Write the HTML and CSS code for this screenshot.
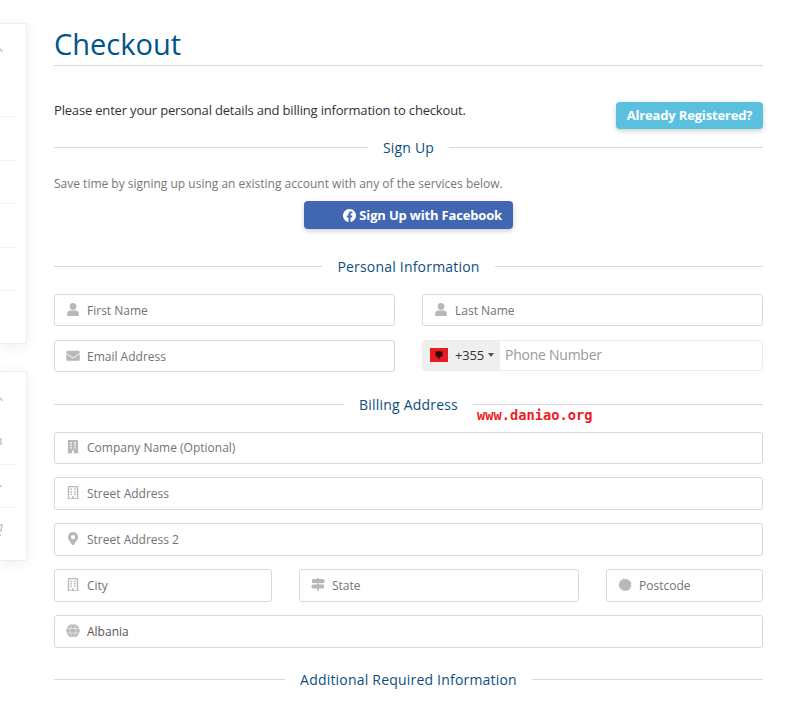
FILE: index.html
```html
<!DOCTYPE html>
<html lang="en">
<head>
<meta charset="utf-8">
<title>Checkout</title>
<link rel="stylesheet" href="styles.css">
</head>
<body>
<svg class="defs" aria-hidden="true">
  <symbol id="user" viewBox="0 0 448 512"><path d="M224 256a128 128 0 1 0 0-256 128 128 0 0 0 0 256zm96 32H128C57 288 0 345 0 416v48c0 26 22 48 48 48h352c26 0 48-22 48-48v-48c0-71-57-128-128-128z"/></symbol>
  <symbol id="mail" viewBox="0 0 512 512"><path d="M502 191c4-3 10 0 10 5v204c0 26-22 48-48 48H48c-26 0-48-22-48-48V196c0-5 6-8 10-5 22 17 52 40 155 114 21 15 57 48 91 47 34 1 71-32 91-47 103-74 133-97 155-114zM256 320c23 0 57-29 74-42 133-96 143-105 173-129 6-4 9-11 9-19v-18c0-26-22-48-48-48H48c-26 0-48 22-48 48v18c0 8 3 15 9 19 30 24 40 33 173 129 17 13 51 42 74 42z"/></symbol>
  <symbol id="building" viewBox="0 0 448 512"><path fill-rule="evenodd" d="M0 476h32V24c0-13 11-24 24-24h336c13 0 24 11 24 24v452h32v36H256V396h-64v116H0zM120 76v52h56v-52zM272 76v52h56v-52zM120 172v52h56v-52zM272 172v52h56v-52zM120 268v52h56v-52zM272 268v52h56v-52z"/></symbol>
  <symbol id="building-line" viewBox="0 0 448 512"><path fill-rule="evenodd" d="M0 472h28V24c0-13 11-24 24-24h344c13 0 24 11 24 24v448h28v40H0zM80 48v416h112v-80h64v80h112V48zM124 92h60v60h-60zM264 92h60v60h-60zM124 188h60v60h-60zM264 188h60v60h-60zM124 284h60v60h-60zM264 284h60v60h-60z"/></symbol>
  <symbol id="pin" viewBox="0 0 384 512"><path d="M172 502C27 291 0 269 0 192a192 192 0 0 1 384 0c0 77-27 99-172 310a24 24 0 0 1-40 0zM192 272a80 80 0 1 0 0-160 80 80 0 0 0 0 160z"/></symbol>
  <symbol id="signs" viewBox="0 0 512 512"><path d="M507 91l-43-43c-6-6-14-9-23-9H288V16c0-9-7-16-16-16h-32c-9 0-16 7-16 16v23H56c-13 0-24 11-24 24v112c0 13 11 24 24 24h385c9 0 17-3 23-9l43-43c7-7 7-49 0-56zM224 496c0 9 7 16 16 16h32c9 0 16-7 16-16V400h-64zm232-248H288v-30h-64v30H71c-9 0-17 3-23 9L5 300c-7 7-7 39 0 46l43 43c6 6 14 9 23 9h385c13 0 24-11 24-24V272c0-13-11-24-24-24z"/></symbol>
  <symbol id="seal" viewBox="0 0 24 24"><path d="M12 0l2 3 3-2 1 3.500 3.500-.5-.5 3.500 3 1-2 3 2 2-2.500 2 1.500 3-3.500.5-.500 3.500-3-1-1.500 3-2.500-2.500L9 24l-1-3.500-3.500 1L4.500 18 1 17l1.500-3L0 12l2.500-2.500L1 7l3.500-1V2.500L8 3.500 9 .5l2.500 2z"/></symbol>
  <symbol id="globe" viewBox="0 0 24 24"><circle cx="12" cy="12" r="12"/><path fill="none" stroke="#fff" stroke-width="1" d="M0 8h24M0 16h24M12 0C5 6 5 18 12 24M12 0c7 6 7 18 0 24"/></symbol>
</svg>
<div class="page">
  <aside class="sidebar">
    <section class="card card-categories"><div class="row head"><i class="chevron"></i></div><div class="row"></div><div class="row"></div><div class="row"></div><div class="row"></div><div class="row"></div></section>
    <section class="card card-actions">
      <div class="row head"><i class="chevron"></i></div>
      <div class="row"><svg viewBox="0 0 4 14"><path d="M0 4h1v5H0"/></svg></div>
      <div class="row"><svg viewBox="0 0 4 14"><path d="M0 7h2"/></svg></div>
      <div class="row"><svg viewBox="0 0 4 14"><path d="M0 2h2L1 8H0M0 12h1"/></svg></div>
    </section>
  </aside>
  <main>
    <h1><span class="title">Checkout</span></h1>
    <div class="intro"><p><span class="intro-text">Please enter your personal details and billing information to checkout.</span></p><button class="btn btn-info">Already Registered?</button></div>
    <h2><span class="signup">Sign Up</span></h2>
    <p class="help">Save time by signing up using an existing account with any of the services below.</p>
    <button class="btn btn-facebook"><svg viewBox="0 0 24 24"><path d="M24 12.070C24 5.400 18.630 0 12 0S0 5.400 0 12.070C0 18.100 4.390 23.090 10.130 24v-8.440H7.080v-3.490h3.050V9.410c0-3.020 1.790-4.690 4.530-4.690 1.310 0 2.680.24 2.680.24v2.970h-1.510c-1.490 0-1.960.93-1.960 1.890v2.250h3.330l-.53 3.490h-2.800V24C19.610 23.090 24 18.100 24 12.070z"/></svg><span>Sign Up with Facebook</span></button>
    <h2><span>Personal Information</span></h2>
    <div class="grid personal">
      <label class="field"><svg><use href="#user"/></svg><span>First Name</span></label>
      <label class="field"><svg><use href="#user"/></svg><span>Last Name</span></label>
      <label class="field"><svg><use href="#mail"/></svg><span>Email Address</span></label>
      <div class="phone"><div class="dial"><svg class="flag" viewBox="0 0 18 14"><path fill="#e41e20" d="M0 0h18v14H0z"/><path fill="#3b0809" d="M5.500 3l2 .7L9 2.800l1.500.9 2-.7v5l-2 1L9 11.500 7.500 9l-2-1z"/></svg><span>+355</span><i class="caret"></i></div><span class="number">Phone Number</span></div>
    </div>
    <h2><span>Billing Address</span><b class="watermark">www.daniao.org</b></h2>
    <div class="billing">
      <label class="field company"><svg><use href="#building"/></svg><span>Company Name (Optional)</span></label>
      <label class="field"><svg><use href="#building-line"/></svg><span>Street Address</span></label>
      <label class="field"><svg><use href="#pin"/></svg><span>Street Address 2</span></label>
      <div class="grid city">
        <label class="field"><svg><use href="#building-line"/></svg><span>City</span></label>
        <label class="field"><svg><use href="#signs"/></svg><span>State</span></label>
        <label class="field"><svg><use href="#seal"/></svg><span>Postcode</span></label>
      </div>
      <label class="field country"><svg><use href="#globe"/></svg><span>Albania</span></label>
    </div>
    <h2><span>Additional Required Information</span></h2>
  </main>
</div>
</body>
</html>
```
FILE: styles.css
```css
* { box-sizing: border-box; }
body { margin: 0; background: #fff; color: #333; font: 13px/18px "Open Sans", sans-serif; overflow: hidden; }
h1, h2, p { margin: 0; font-weight: 400; }
.defs { display: none; }
.page { display: grid; grid-template-columns: 27px 709px; column-gap: 27px; height: 708px; }
.sidebar { padding-top: 23px; }
.card { border: 1px solid #e8efef; border-left: 0; box-shadow: 0 2px 14px rgba(0,0,0,.07); padding-right: 9px; }
.card-categories { height: 321px; margin-bottom: 27px; }
.card-actions { height: 190px; }
.row { height: 43.500px; border-bottom: 1px solid #f0f1f2; display: flex; align-items: center; }
.row:last-child { border: 0; }
.card-categories .head { height: 93px; align-items: flex-start; padding-top: 24px; }
.card-actions .head { height: 49px; border: 0; padding-top: 6px; }
.chevron { width: 6px; height: 6px; border: solid #cbd3d7; border-width: 2px 2px 0 0; transform: translateX(-4px) rotate(-45deg); }
.row svg { width: 4px; height: 14px; fill: none; stroke: #b9c7d4; stroke-width: 1.500px; }
h1 { height: 66px; border-bottom: 1px solid #d5d6d7; padding-top: 24px; font-size: 29px; line-height: 40px; color: #058; }
.intro { height: 71px; padding-top: 36px; display: flex; justify-content: space-between; align-items: flex-start; }
.intro-text { letter-spacing: -.18px; }
.intro p { margin-top: -1px; }
.btn { display: flex; align-items: center; border: 0; border-radius: 4px; color: #fff; font: 700 13px/18px "Open Sans", sans-serif; letter-spacing: -.17px; box-shadow: 0 2px 5px rgba(0,0,0,.2); padding: 0; white-space: nowrap; }
.btn-info { width: 147px; height: 27px; justify-content: center; padding-bottom: 1px; background: #5bc0de; }
h2 { position: relative; height: 21px; display: flex; align-items: center; gap: 15px; font-size: 14px; line-height: 21px; color: #0b4f80; letter-spacing: .2px; white-space: nowrap; }
h2::before, h2::after { content: ""; height: 1px; flex: 1; background: #dadbdc; }
.help { margin-top: 17px; height: 26px; font-size: 12px; color: #777; }
.btn-facebook { width: 209px; height: 28px; margin: 0 0 27px 250px; background: #4267b2; justify-content: flex-end; padding-right: 11px; gap: 3px; }
.btn-facebook svg { width: 13px; height: 13px; fill: #fff; }
.grid { display: grid; column-gap: 27px; }
.personal { grid-template-columns: 1fr 1fr; grid-auto-rows: 32px; row-gap: 14px; margin: 17px 0 22px; }
.field { height: 33px; border: 1px solid #d9d9d9; border-radius: 3px; background: #fff; display: flex; align-items: center; padding-left: 11px; gap: 7px; font-size: 12px; color: #737373; }
.field svg { width: 14px; height: 13.500px; fill: #b8b8b8; position: relative; top: -1px; }
.field span { padding-top: 1px; }
.personal .field, .company { height: 32px; }
.personal .field svg { top: -.7px; }
.company span { padding-top: 0; margin-top: -1px; }
.phone { height: 31px; display: flex; border: 1px solid #ececec; border-radius: 4px; overflow: hidden; }
.dial { width: 77px; background: #efefef; display: flex; align-items: center; padding-left: 7px; }
.dial span { letter-spacing: -.2px; margin-top: -1px; }
.flag { width: 18px; height: 14px; margin: -1px 7px 0 0; }
.caret { border: 3px solid transparent; border-top: 4px solid #555; border-bottom: 0; margin-left: 4px; margin-top: -1px; }
.number { color: #999; font-size: 14px; line-height: 28px; padding-left: 5px; letter-spacing: -.25px; }
.watermark { position: absolute; left: 423px; top: 11px; color: #ed1c24; font: 700 13.700px/21px "DejaVu Sans Mono", monospace; letter-spacing: 0; }
.billing { margin: 17px 0 21px; display: grid; row-gap: 13px; }
.city { grid-template-columns: 218px 280px 157px; }
.country { color: #555; }
```
